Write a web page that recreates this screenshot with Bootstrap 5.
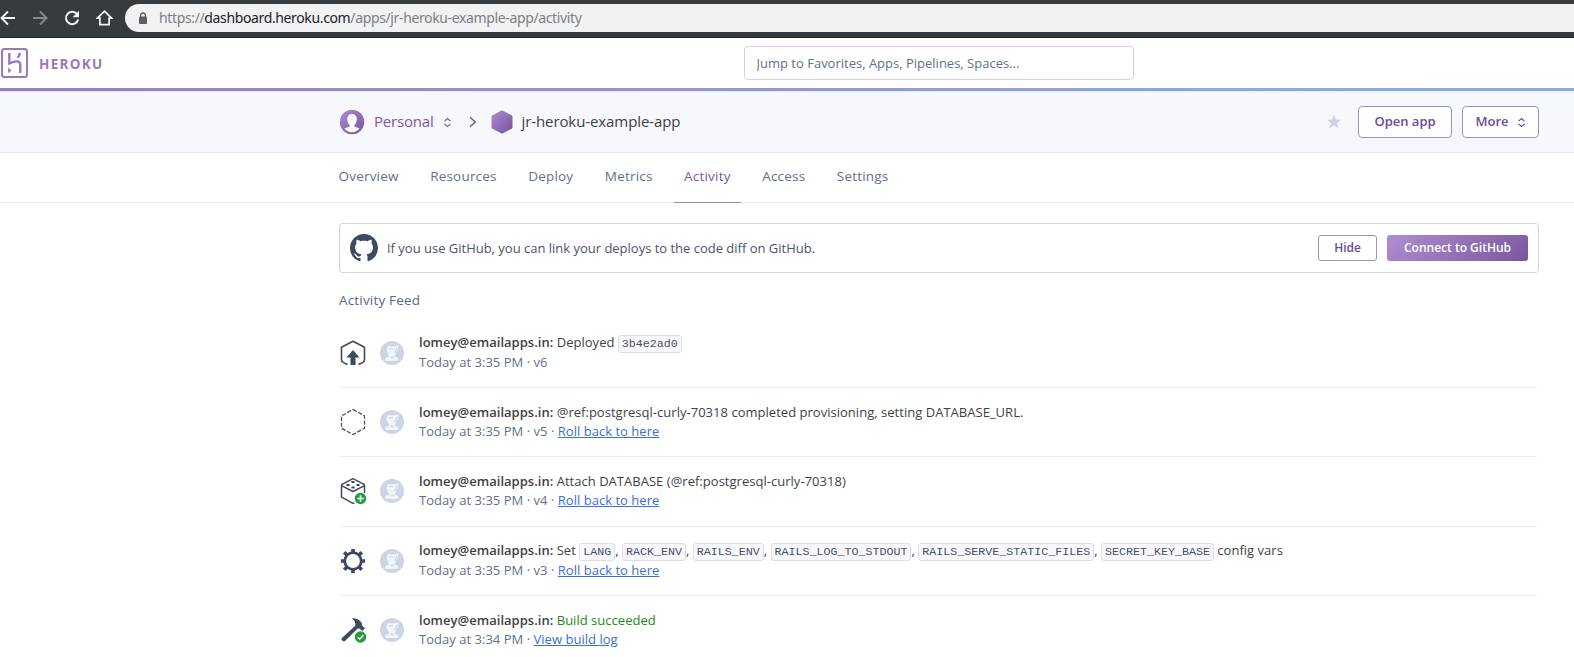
<!DOCTYPE html>
<html lang="en">
<head>
<meta charset="utf-8">
<title>jr-heroku-example-app · Activity | Heroku</title>
<meta name="viewport" content="width=device-width, initial-scale=1">
<link href="https://cdn.jsdelivr.net/npm/bootstrap@5.3.0/dist/css/bootstrap.min.css" rel="stylesheet">
<style>
body{font-family:"Open Sans","Noto Sans",sans-serif;font-size:13px;line-height:19.4px;color:#3f3f44;background:#fff;overflow:hidden}
svg{display:block;flex:none}
.chrome-bar{height:38px;background:#363b3f;border-bottom:1px solid #22272b;padding:4px 0 5px}
.chrome-bar .nav-ico{margin-right:16px}
.url-pill{height:28px;background:#f1f2f3;border-radius:14px 0 0 14px;margin-left:12px;padding-left:13px;font-family:"Noto Sans","Open Sans",sans-serif;font-size:14px;letter-spacing:-.365px;color:#7b8085}
.url-pill svg{margin-right:11px}
.url-pill b{font-weight:400;color:#202124}
.top-head{height:50px}
.brand-word{font-size:13.5px;font-weight:700;letter-spacing:1.3px;color:#9a78bd;margin-left:10px;line-height:20px;padding-top:1px}
.search-col{margin-left:640px;width:390px}
.search-box{height:34px;border:1px solid #cfd3e4;border-radius:4px;padding:0 12px;font-size:13px;color:#62708c;background:#fff;line-height:32px}
.search-box::placeholder{color:#62708c;opacity:1}
.rainbow{height:3px;background:linear-gradient(90deg,#9c7cc0,#9b8dcb 35%,#92a0d6 60%,#84b1dc)}
.crumbs{height:62px;background:#f7f8fc;border-top:1px solid #e6e8f3;border-bottom:1px solid #e3e5ef}
.page-inner{margin-left:339px;width:1200px}
.crumb-text{font-size:15px}
.crumb-owner{margin-left:9px;letter-spacing:-.2px}
.crumb-app{margin-left:8px;letter-spacing:-.09px}
.purple{color:#79589f}
.hbtn{border:1px solid #9c93bd;border-radius:4px;background:#fff;color:#6b4a96;font-weight:600;font-size:13px;height:32px;padding:0;display:inline-flex;align-items:center;justify-content:center}
.hbtn-sm{font-size:12px;height:26px;border-radius:3px}
.hbtn-fill{color:#fff;border:0;background:linear-gradient(135deg,#ae8dd0,#79589f)}
.w-open{width:94px}.w-more{width:77px}.w-hide{width:59px}.w-connect{width:141px}
.ms-10{margin-left:10px}
.tabs-row{height:50px;border-bottom:1px solid #e9ebf0}
.tabs-row .page-inner{gap:31.5px;position:relative;left:-.5px}
.tabs-row a{font-size:13.5px;color:#62708c;text-decoration:none;letter-spacing:.2px;height:50px;line-height:46px;white-space:nowrap}
.tabs-row a.active{color:#79589f;border-bottom:1px solid #9a88b5;padding:0 10px;margin:0 -10px}
.gh-box{height:50px;border:1px solid #d3d5e5;border-radius:4px;margin-top:20px;padding:0 10px;color:#4b5465}
.gh-box .gh-text{margin-left:9px;padding-top:2px;letter-spacing:-.01px}
.feed-title{font-size:13.5px;color:#596981;letter-spacing:.18px;margin-top:18px;height:28px}
.feed-row{height:69.2px;border-bottom:1px solid #eceef2;width:1198px}
.feed-row:last-child{border:0}
.feed-row b{font-weight:600}
.feed-row .who{margin-left:13px}
.feed-row .entry{margin-left:15px;letter-spacing:.025px}
.feed-row .meta{color:#62708c}
.feed-row a{color:#3a6fe0}
.feed-row code{font-family:"Liberation Mono",monospace;font-size:11.67px;letter-spacing:0;color:#475066;background:#f7f8fb;border:1px solid #dcdfe9;border-radius:3px;padding:1px 3px;line-height:14px;display:inline-block}
.ok{color:#1a8a1a}
</style>
</head>
<body>
<svg width="0" height="0" class="position-absolute">
<defs>
<linearGradient id="pg" x1="0" y1="0" x2="1" y2="1"><stop offset="0" stop-color="#ae8dd0"/><stop offset="1" stop-color="#75529c"/></linearGradient>
<symbol id="updown" viewBox="0 0 10 12"><path d="M1.700 4.500 5 1.500l3.300 3M1.700 7.500 5 10.500l3.300-3" fill="none" stroke="currentColor" stroke-width="1.300"/></symbol>
<symbol id="avatar" viewBox="0 0 24 24"><circle cx="12" cy="12" r="12" fill="#cbd5e5"/><path d="M7.300 5.300h7.900l3.300-.8-.6 4.500-2 2.500c0 1.700-.6 3-1.500 3.900 1.800.7 3.800 1 4.200 3.100L17 20H6.300l-1.500-1.700c.5-1.900 2.900-2.200 4.700-2.900C8.300 14.500 7.600 12.500 7.500 11l-.9-1.500z" fill="#f1f4f9"/><path d="M9 8.300c1.600-1.200 3-1 4.200-.2M17.300 6.500 14.500 12M10.500 15.800l1.700 1.300 1.800-1.300" fill="none" stroke="#cbd5e5" stroke-width="1.100"/></symbol>
</defs>
</svg>

<div class="chrome-bar d-flex align-items-center">
  <svg class="nav-ico" width="16" height="16" viewBox="0 0 16 16" fill="none" stroke="#f1f3f4" stroke-width="1.900"><path d="M15 8H1.500M8 1.500 1.500 8 8 14.500"/></svg>
  <svg class="nav-ico" width="16" height="16" viewBox="0 0 16 16" fill="none" stroke="#85898c" stroke-width="1.900"><path d="M1 8h13.500M8 1.500 14.500 8 8 14.500"/></svg>
  <svg class="nav-ico" width="16" height="16" viewBox="0 0 16 16" fill="none" stroke="#f1f3f4" stroke-width="2"><path d="M13.300 4.400A6.200 6.200 0 1 0 14.200 9.500"/><path d="M15 .8v6.400H8.600z" fill="#f1f3f4" stroke="none"/></svg>
  <svg width="17" height="18" viewBox="0 0 18 18" fill="none" stroke="#f1f3f4" stroke-width="1.900"><path d="M1.500 9.200 9 1.800l7.500 7.400h-2.600v6.900H4.100V9.200z"/></svg>
  <div class="url-pill flex-grow-1 d-flex align-items-center">
    <svg width="10" height="13" viewBox="0 0 10 13"><rect x="1" y="4.500" width="8" height="7.500" rx="1" fill="#5a5f64"/><path d="M2.700 5V3.300a2.300 2.300 0 0 1 4.600 0V5" fill="none" stroke="#5a5f64" stroke-width="1.300"/></svg>
    <span>https://<b>dashboard.heroku.com</b>/apps/jr-heroku-example-app/activity</span>
  </div>
</div>

<header class="top-head d-flex align-items-center">
  <svg width="29" height="32" viewBox="0 0 29 32" fill="none" stroke="#9a78bd"><rect x="2" y="2" width="25" height="28" rx="2.500" stroke-width="2"/><path d="M9.300 6v10.300c3-1.300 5.500-1.900 7.500-1.900 2.600 0 3.500 1.200 3.500 3.300V26M20 6c-.3 1.900-1.200 3.400-2.500 4.800" stroke-width="2.400"/><path d="M8.100 20.500v5.800l3.300-2.900z" fill="#9a78bd" stroke="none"/></svg>
  <span class="brand-word">HEROKU</span>
  <div class="search-col"><input class="search-box w-100" placeholder="Jump to Favorites, Apps, Pipelines, Spaces..."></div>
</header>
<div class="rainbow"></div>

<div class="crumbs">
  <div class="page-inner d-flex align-items-center h-100">
    <svg width="26" height="26" viewBox="0 0 26 26"><circle cx="13" cy="13" r="12.200" fill="url(#pg)"/><path d="M13 5c3 0 4.800 2 4.800 5s-1.200 5.200-2.500 6.200v1.400c1.200.9 4 1 5.200 2.200A11 11 0 0 1 13 23.300a11 11 0 0 1-7.500-3.500c1.200-1.200 4-1.300 5.200-2.200v-1.400C9.400 15.200 8.200 13 8.200 10S10 5 13 5z" fill="#fff"/></svg>
    <span class="crumb-text crumb-owner purple">Personal</span>
    <svg class="purple ms-10" width="9" height="11"><use href="#updown"/></svg>
    <svg width="8" height="12" viewBox="0 0 8 12" fill="none" stroke="#596981" stroke-width="1.500" style="margin-left:17px"><path d="M1 1.200 6.300 6 1 10.800"/></svg>
    <svg width="22" height="24" viewBox="0 0 22 24" style="margin-left:14px"><path d="M11 .8 21 6v12l-10 5.200L1 18V6z" fill="url(#pg)" stroke="url(#pg)" stroke-width="1" stroke-linejoin="round"/></svg>
    <span class="crumb-text crumb-app">jr-heroku-example-app</span>
    <svg class="ms-auto me-3" width="16" height="16" viewBox="0 0 16 16"><path d="M8 .8l2 5h5.200l-4.100 3.200 1.500 5.200L8 11.200l-4.600 3L4.900 9 .8 5.800H6z" fill="#cbd3e2"/></svg>
    <button class="hbtn w-open">Open app</button>
    <button class="hbtn w-more ms-10">More<svg class="ms-2" width="9" height="11"><use href="#updown"/></svg></button>
  </div>
</div>

<nav class="tabs-row">
  <div class="page-inner d-flex">
    <a href="#">Overview</a><a href="#">Resources</a><a href="#">Deploy</a><a href="#">Metrics</a><a href="#" class="active">Activity</a><a href="#">Access</a><a href="#">Settings</a>
  </div>
</nav>

<main class="page-inner">
  <div class="gh-box d-flex align-items-center">
    <svg width="28" height="28" viewBox="0 0 16 16"><path fill="#3f4a5e" d="M8 0C3.580 0 0 3.580 0 8c0 3.540 2.290 6.530 5.470 7.590.4.070.55-.17.55-.38 0-.19-.01-.82-.01-1.490-2.010.37-2.530-.49-2.690-.94-.09-.23-.48-.94-.82-1.130-.28-.15-.68-.52-.01-.53.63-.01 1.080.58 1.230.82.72 1.210 1.870.87 2.330.66.07-.52.28-.87.51-1.070-1.780-.2-3.640-.89-3.640-3.950 0-.87.31-1.590.82-2.150-.08-.2-.36-1.020.08-2.120 0 0 .67-.21 2.200.82.64-.18 1.320-.27 2-.27s1.360.09 2 .27c1.530-1.040 2.200-.82 2.200-.82.44 1.100.16 1.920.08 2.120.51.56.82 1.270.82 2.150 0 3.070-1.870 3.750-3.650 3.950.29.25.54.73.54 1.480 0 1.070-.01 1.930-.01 2.200 0 .21.15.46.55.38A8.010 8.010 0 0 0 16 8c0-4.420-3.580-8-8-8z"/></svg>
    <span class="gh-text">If you use GitHub, you can link your deploys to the code diff on GitHub.</span>
    <button class="hbtn hbtn-sm w-hide ms-auto">Hide</button>
    <button class="hbtn hbtn-sm hbtn-fill w-connect ms-10">Connect to GitHub</button>
  </div>
  <div class="feed-title">Activity Feed</div>

  <div>
    <div class="feed-row d-flex align-items-center">
      <svg width="28" height="28" viewBox="0 0 28 28" fill="none" stroke="#3f4a5e" stroke-width="1.600" stroke-linejoin="round"><path d="M8.500 25.500 4.500 23.600Q2.500 22.600 2.500 21V8.300L14 2.200l11.500 6.100V21q0 1.600-2 2.600l-4 1.900"/><path d="M14 11 20.500 18.500h-4v7.500h-5v-7.500h-4z" fill="#3f4a5e" stroke="none"/></svg>
      <svg class="who" width="24" height="24"><use href="#avatar"/></svg>
      <div class="entry"><div><b>lomey@emailapps.in:</b> Deployed <code>3b4e2ad0</code></div><div class="meta">Today at 3:35 PM · v6</div></div>
    </div>
    <div class="feed-row d-flex align-items-center">
      <svg width="28" height="28" viewBox="0 0 28 28" fill="none" stroke="#3f4a5e" stroke-width="1.200" stroke-dasharray="4.200 1.700"><path d="M14 1.500 25.500 7.800v12.400L14 26.500 2.500 20.200V7.800z"/></svg>
      <svg class="who" width="24" height="24"><use href="#avatar"/></svg>
      <div class="entry"><div><b>lomey@emailapps.in:</b> @ref:postgresql-curly-70318 completed provisioning, setting DATABASE_URL.</div><div class="meta">Today at 3:35 PM · v5 · <a href="#">Roll back to here</a></div></div>
    </div>
    <div class="feed-row d-flex align-items-center">
      <svg width="28" height="28" viewBox="0 0 28 28" fill="none" stroke="#3f4a5e" stroke-width="1.500" stroke-linejoin="round"><path d="M25.500 16V8.800Q25.500 7.500 24 6.800L14 1.700 4 6.800Q2.500 7.500 2.500 8.800v11.400L14 26.400l1.500-.5M2.500 8.700 14 14.500l11.500-5.800"/><path d="M13.200 5.100h1.600M8.200 7.900h1.600M13.200 10.500h1.600M18.200 7.900h1.600" stroke-width="2" stroke-linecap="round"/><circle cx="21.500" cy="21.500" r="5.700" fill="#1f9d3a" stroke="none"/><path d="M21.500 18.200v6.600M18.200 21.500h6.600" stroke="#fff" stroke-width="1.600"/></svg>
      <svg class="who" width="24" height="24"><use href="#avatar"/></svg>
      <div class="entry"><div><b>lomey@emailapps.in:</b> Attach DATABASE (@ref:postgresql-curly-70318)</div><div class="meta">Today at 3:35 PM · v4 · <a href="#">Roll back to here</a></div></div>
    </div>
    <div class="feed-row d-flex align-items-center">
      <svg width="28" height="28" viewBox="0 0 28 28" fill="none" stroke="#3f4a5e"><circle cx="14" cy="14" r="8.300" stroke-width="2.800"/><path d="M14 1.900v4M14 22.100v4M1.900 14h4M22.100 14h4M5.200 5.200l2.800 2.800M20 20l2.800 2.800M5.200 22.800 8 20M20 8l2.800-2.800" stroke-width="3.600"/></svg>
      <svg class="who" width="24" height="24"><use href="#avatar"/></svg>
      <div class="entry"><div><b>lomey@emailapps.in:</b> Set <code>LANG</code>, <code>RACK_ENV</code>, <code>RAILS_ENV</code>, <code>RAILS_LOG_TO_STDOUT</code>, <code>RAILS_SERVE_STATIC_FILES</code>, <code>SECRET_KEY_BASE</code> config vars</div><div class="meta">Today at 3:35 PM · v3 · <a href="#">Roll back to here</a></div></div>
    </div>
    <div class="feed-row d-flex align-items-center">
      <svg width="28" height="28" viewBox="0 0 28 28"><path d="M13 2.200c4-.4 7.600 1.200 9.800 4.800l.2 2.600 2.900 2.500-2.400 3-3.300-2.700-1.500.1L6.200 24.700c-1.700 1.500-4.600-.6-3.300-2.700L16.200 9.700c.8-2.700-.6-5.500-3.200-7.500z" fill="#3f4a5e"/><circle cx="21.500" cy="21" r="6.300" fill="#fff"/><circle cx="21.500" cy="21" r="5.700" fill="#1f9d3a"/><path d="m18.700 21.200 2 2 3.700-4" fill="none" stroke="#fff" stroke-width="1.500"/></svg>
      <svg class="who" width="24" height="24"><use href="#avatar"/></svg>
      <div class="entry"><div><b>lomey@emailapps.in:</b> <span class="ok">Build succeeded</span></div><div class="meta">Today at 3:34 PM · <a href="#">View build log</a></div></div>
    </div>
  </div>
</main>
<script src="https://cdn.jsdelivr.net/npm/bootstrap@5.3.0/dist/js/bootstrap.bundle.min.js"></script>
</body>
</html>
